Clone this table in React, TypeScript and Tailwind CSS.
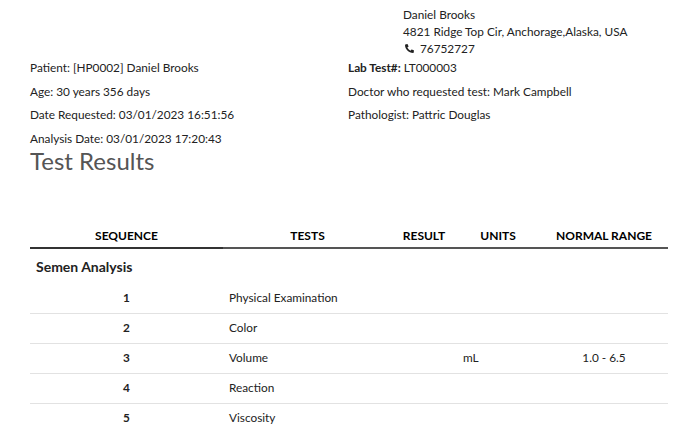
import React from 'react';
import { FaPhoneAlt } from 'react-icons/fa';

interface TestRow {
  seq: number;
  test: string;
  result?: string;
  units?: string;
  range?: string;
}

const rows: TestRow[] = [
  { seq: 1, test: 'Physical Examination' },
  { seq: 2, test: 'Color' },
  { seq: 3, test: 'Volume', units: 'mL', range: '1.0 - 6.5' },
  { seq: 4, test: 'Reaction' },
  { seq: 5, test: 'Viscosity' },
];

const InfoLine: React.FC<{ children: React.ReactNode }> = ({ children }) => (
  <div className="h-[23.5px] leading-[23.5px]">{children}</div>
);

export default function App() {
  return (
    <div className="min-h-screen bg-white pl-[30px] pr-[22px] text-[11.8px] text-[#222] font-['Lato','Liberation_Sans',sans-serif]">
      {/* address block */}
      <div className="pl-[373px] pt-[6px] leading-[17px]">
        <div>Daniel Brooks</div>
        <div>4821 Ridge Top Cir, Anchorage,Alaska, USA</div>
        <div className="flex items-center">
          <FaPhoneAlt className="w-[9px] h-[9px] mr-[6px] ml-[2px]" />
          <span>76752727</span>
        </div>
      </div>

      {/* patient info */}
      <div className="flex -mt-[1px]">
        <div className="w-[318px]">
          <InfoLine>Patient: [HP0002] Daniel Brooks</InfoLine>
          <InfoLine>Age: 30 years 356 days</InfoLine>
          <InfoLine>Date Requested: 03/01/2023 16:51:56</InfoLine>
          <InfoLine>Analysis Date: 03/01/2023 17:20:43</InfoLine>
        </div>
        <div>
          <InfoLine>
            <span className="font-bold">Lab Test#:</span> LT000003
          </InfoLine>
          <InfoLine>Doctor who requested test: Mark Campbell</InfoLine>
          <InfoLine>Pathologist: Pattric Douglas</InfoLine>
        </div>
      </div>

      <h1 className="-mt-[1px] text-[24px] leading-[24px] text-[#555]">Test Results</h1>

      {/* results table */}
      <table className="mt-[55px] w-full border-collapse">
        <thead>
          <tr className="text-[12px] font-bold text-black uppercase leading-[16px]">
            <th className="w-[193px] pb-[3px] border-b-2 border-[#333]">Sequence</th>
            <th className="w-[169px] pb-[3px] border-b-2 border-[#555]">Tests</th>
            <th className="w-[64px] pb-[3px] border-b-2 border-[#555]">Result</th>
            <th className="w-[84px] pb-[3px] border-b-2 border-[#555]">Units</th>
            <th className="pb-[3px] border-b-2 border-[#555]">Normal Range</th>
          </tr>
        </thead>
        <tbody>
          <tr>
            <td colSpan={5} className="h-[35px] pt-[1px] pl-[6px] text-[14px] font-bold text-[#222]">
              Semen Analysis
            </td>
          </tr>
          {rows.map((r, i) => (
            <tr key={r.seq} className={i > 0 ? 'border-t border-[#e2e2e2]' : ''}>
              <td className="h-[30px] text-center font-bold">{r.seq}</td>
              <td className="px-[6px]">{r.test}</td>
              <td className="text-center">{r.result}</td>
              <td className="px-[7px]">{r.units}</td>
              <td className="text-center">{r.range}</td>
            </tr>
          ))}
        </tbody>
      </table>
    </div>
  );
}
